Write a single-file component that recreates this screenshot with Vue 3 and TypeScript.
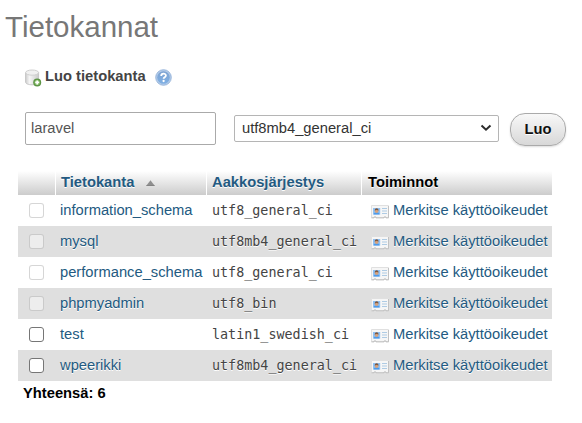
<script setup lang="ts">
import { ref } from 'vue'

interface Database {
  name: string
  collation: string
  system: boolean
}

const databases: Database[] = [
  { name: 'information_schema', collation: 'utf8_general_ci', system: true },
  { name: 'mysql', collation: 'utf8mb4_general_ci', system: true },
  { name: 'performance_schema', collation: 'utf8_general_ci', system: true },
  { name: 'phpmyadmin', collation: 'utf8_bin', system: true },
  { name: 'test', collation: 'latin1_swedish_ci', system: false },
  { name: 'wpeerikki', collation: 'utf8mb4_general_ci', system: false },
]

const newName = ref('laravel')
const collation = ref('utf8mb4_general_ci')
const selected = ref<string[]>([])
</script>

<template>
  <main class="page">
    <h1 class="title">Tietokannat</h1>

    <div class="create-label">
      <svg class="db-icon" width="18" height="18" viewBox="0 0 18 18">
        <defs>
          <linearGradient id="drum" x1="0" x2="1" y1="0" y2="0">
            <stop offset="0" stop-color="#cdcdcd" />
            <stop offset="0.3" stop-color="#f5f5f5" />
            <stop offset="1" stop-color="#cacaca" />
          </linearGradient>
        </defs>
        <path d="M.6 3.500v9.700c0 1.500 2.900 2.600 6.500 2.600s6.500-1.100 6.500-2.600V3.500z" fill="url(#drum)" stroke="#c6c6c6" />
        <ellipse cx="7.100" cy="3.600" rx="6.500" ry="2.600" fill="#f0f0f0" stroke="#cfcfcf" />
        <circle cx="12.200" cy="13.400" r="4" fill="#5c9445" />
        <circle cx="12.200" cy="13.400" r="2.700" fill="#85bb66" />
        <path d="M12.200 11.400v4M10.200 13.400h4" stroke="#fff" stroke-width="1.700" />
      </svg>
      <span class="create-text">Luo tietokanta</span>
      <svg class="help-icon" width="17" height="17" viewBox="0 0 17 17">
        <defs>
          <linearGradient id="help" x1="0" x2="0" y1="0" y2="1">
            <stop offset="0" stop-color="#7ea3d2" />
            <stop offset="1" stop-color="#7fb0e4" />
          </linearGradient>
        </defs>
        <circle cx="8.500" cy="8.500" r="7.800" fill="#b4cbe8" stroke="#94b3da" stroke-width="0.900" />
        <circle cx="8.500" cy="8.500" r="6.300" fill="url(#help)" />
        <path d="M6.200 7c0-3 4.700-3 4.700-.4 0 1.700-2.300 1.500-2.300 3.200" fill="none" stroke="#fff" stroke-width="1.800" />
        <circle cx="8.600" cy="12" r="1.150" fill="#fff" />
      </svg>
    </div>

    <form class="create-form" @submit.prevent>
      <input v-model="newName" class="name-input" type="text" spellcheck="false" />
      <div class="select">
        <span>{{ collation }}</span>
        <svg width="12" height="8" viewBox="0 0 12 8">
          <path d="M1.500 1.500L6 5.700l4.500-4.200" fill="none" stroke="#2b2b2b" stroke-width="2" />
        </svg>
      </div>
      <button class="submit" type="submit">Luo</button>
    </form>

    <section class="table">
      <div class="row head">
        <div class="cell"></div>
        <div class="cell link name">
          Tietokanta
          <svg class="sort" width="9" height="6" viewBox="0 0 9 6">
            <path d="M4.500 0.300L8.700 5.700H.3z" fill="#8f8f8f" />
            <path d="M.3 5.500h8.400" stroke="#747474" stroke-width="0.700" />
          </svg>
        </div>
        <div class="cell link coll">Aakkosjärjestys</div>
        <div class="cell actions-head">Toiminnot</div>
      </div>
      <div v-for="db in databases" :key="db.name" class="row item">
        <div class="cell check">
          <input v-model="selected" type="checkbox" class="box" :value="db.name" :disabled="db.system" />
        </div>
        <div class="cell link name">{{ db.name }}</div>
        <div class="cell coll mono">{{ db.collation }}</div>
        <div class="cell link actions">
          <svg class="card" width="18" height="14" viewBox="0 0 18 14">
            <path d="M.5.500h17v12.300h-2.500v-.8h-2v.8H5v-.8H3v.8H.5z" fill="#f6f6f6" stroke="#e0e0e0" />
            <path d="M.5 12.800H3v-.8h2v.8h8v-.8h2v.8h2.500V1" fill="none" stroke="#bdbdbd" stroke-width="0.900" />
            <path d="M2 3h7.200v6.500H2z" fill="#8fc1f3" />
            <path d="M2.600 9.500c0-3 6-3 6 0z" fill="#4f9ae8" />
            <circle cx="5.600" cy="6.200" r="1.700" fill="#d9a37c" />
            <path d="M3.700 5.700c0-3.200 3.900-3.200 3.900 0-1-.9-2.900-.9-3.900 0z" fill="#80573c" />
            <path d="M11 3.500h5M11 6h5M11 8.500h5" stroke="#aecbe4" />
          </svg>
          <span>Merkitse käyttöoikeudet</span>
        </div>
      </div>
    </section>
    <div class="total">Yhteensä: {{ databases.length }}</div>
  </main>
</template>

<style>
body {
  background: #fff;
}
</style>

<style scoped>
.page {
  box-sizing: border-box;
  width: 582px;
  height: 423px;
  overflow: hidden;
  padding-top: 9px;
  font-family: "Liberation Sans", Arial, sans-serif;
  font-size: 14.72px;
  color: #444;
}
.title {
  margin: 0 0 0 5px;
  font-size: 29.5px;
  line-height: 36px;
  font-weight: 400;
  color: #777;
}
.create-label {
  display: flex;
  align-items: center;
  height: 20px;
  margin: 22px 0 0 25px;
  font-weight: 700;
}
.db-icon {
  margin-top: 2px;
}
.create-text {
  margin: -2px 9px 0 2px;
}
.create-form {
  display: flex;
  align-items: flex-start;
  margin: 25px 0 0 25px;
}
.name-input {
  box-sizing: border-box;
  width: 191px;
  height: 33px;
  margin: 0 18px 0 0;
  padding: 0 5px 1px;
  border: 1px solid #aaa;
  border-radius: 2px;
  outline: none;
  background: #fff;
  font: inherit;
  color: #555;
}
.select {
  box-sizing: border-box;
  display: flex;
  align-items: center;
  justify-content: space-between;
  width: 265px;
  height: 27px;
  margin-top: 3px;
  padding: 0 6px 1px 7px;
  border: 1px solid #b5b5b5;
  border-radius: 2px;
  color: #333;
}
.submit {
  box-sizing: border-box;
  width: 56px;
  height: 33px;
  margin: 1px 0 0 11px;
  padding: 0 0 2px;
  border: 1px solid #aaa;
  border-radius: 15px;
  background: linear-gradient(#f8f8f8, #d8d8d8);
  box-shadow: 0 1px 2px #ddd;
  font: inherit;
  font-weight: 700;
  color: #111;
  text-shadow: 0 1px 0 #fff;
}
.table {
  width: 534px;
  margin: 25px 0 0 18px;
}
.row {
  display: grid;
  grid-template-columns: 37px 150px 154px 190px;
  column-gap: 1px;
  text-shadow: 0 1px 0 #fff;
}
.head {
  height: 24px;
  font-weight: 700;
  color: #000;
}
.head .cell {
  background: linear-gradient(#fff, #ccc);
  padding-bottom: 2px;
}
.item {
  height: 31px;
}
.item:nth-child(odd) {
  background: #dfdfdf;
}
.cell {
  box-sizing: border-box;
  display: flex;
  align-items: center;
  white-space: nowrap;
}
.link {
  color: #235a81;
}
.name {
  padding-left: 4px;
}
.head .name {
  padding-left: 5px;
}
.item .cell {
  padding-bottom: 1px;
}
.coll {
  padding-left: 5px;
}
.sort {
  margin: 2px 0 0 12px;
}
.item .mono {
  padding-bottom: 0;
  font-family: "DejaVu Sans Mono", monospace;
  font-size: 13.4px;
}
.actions-head {
  padding-left: 6px;
}
.actions {
  padding-left: 9px;
  gap: 4px;
}
.card {
  margin-top: 3px;
}
.item .check {
  padding: 0 0 0 11px;
}
.box {
  appearance: none;
  box-sizing: border-box;
  width: 15px;
  height: 15px;
  margin: 0;
  border: 1px solid #767676;
  border-radius: 3px;
  background: #fff;
}
.box:disabled {
  border-color: rgba(118, 118, 118, 0.3);
  background: rgba(255, 255, 255, 0.45);
}
.total {
  margin: 3px 0 0 23px;
  line-height: 18px;
  font-weight: 700;
  color: #000;
}
</style>
